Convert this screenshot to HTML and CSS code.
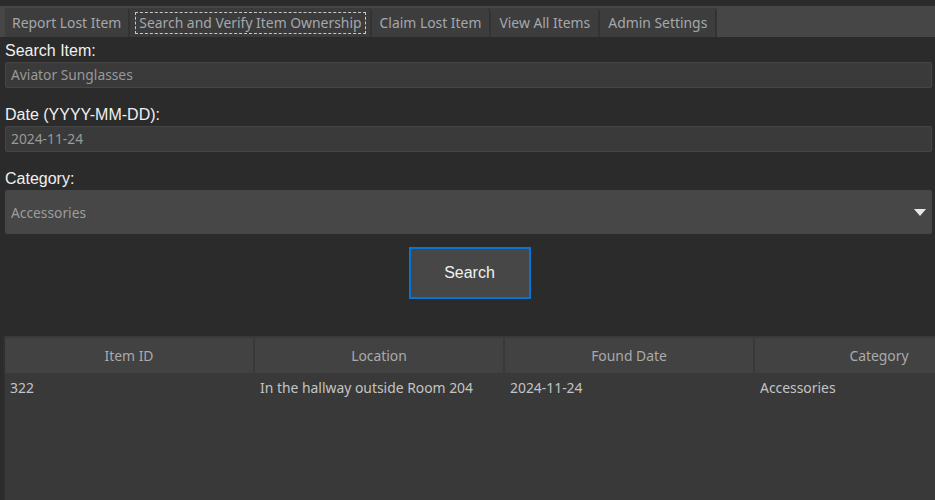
FILE: index.html
```html
<!DOCTYPE html>
<html>
<head>
<meta charset="utf-8">
<link rel="stylesheet" href="styles.css">
</head>
<body>
<div class="app">
  <div class="tabbar">
    <div class="tab first-tab">Report Lost Item</div>
    <div class="tab selected"><span class="focus">Search and Verify Item Ownership</span></div>
    <div class="tab">Claim Lost Item</div>
    <div class="tab">View All Items</div>
    <div class="tab">Admin Settings</div>
  </div>
  <div class="content">
    <div class="label first">Search Item:</div>
    <div class="entry">Aviator Sunglasses</div>
    <div class="label">Date (YYYY-MM-DD):</div>
    <div class="entry">2024-11-24</div>
    <div class="label">Category:</div>
    <div class="combo">
      <span class="combo-text">Accessories</span>
      <svg class="arrow" width="12" height="7" viewBox="0 0 12 7"><polygon points="0,0 12,0 6,7" fill="#e8e8e8"/></svg>
    </div>
    <div class="btn-row"><div class="btn">Search</div></div>
    <div class="table">
      <div class="thead">
        <div class="th">Item ID</div>
        <div class="th">Location</div>
        <div class="th">Found Date</div>
        <div class="th">Category</div>
      </div>
      <div class="tr">
        <div class="td">322</div>
        <div class="td">In the hallway outside Room 204</div>
        <div class="td">2024-11-24</div>
        <div class="td">Accessories</div>
      </div>
    </div>
  </div>
</div>
</body>
</html>
```
FILE: styles.css
```css
html, body {
  margin: 0;
  padding: 0;
  background: #2b2b2b;
  width: 935px;
  height: 500px;
  overflow: hidden;
}
.app {
  width: 935px;
  height: 500px;
  display: flex;
  flex-direction: column;
  background: #2b2b2b;
}
.tabbar {
  margin-top: 6px;
  height: 31px;
  background: #464646;
  display: flex;
  align-items: flex-end;
  padding-left: 5px;
  box-sizing: border-box;
}
.tab {
  height: 29px;
  box-sizing: border-box;
  background: #3d3d3d;
  border-right: 2px solid #333333;
  border-top-right-radius: 3px;
  color: #a4a8ad;
  font-family: "Noto Sans", sans-serif;
  font-size: 13.9px;
  display: flex;
  align-items: center;
  padding: 0 8px 0 8px;
  white-space: nowrap;
}
.tab.first-tab {
  padding: 0 7px 0 7px;
}
.tab.selected {
  padding: 0 4px 0 5px;
  background: #3b3b3b;
}
.focus {
  border: 1px dashed #c8c8c8;
  padding: 0 3px 1px 3px;
  line-height: 19px;
}
.content {
  flex: 1;
  display: flex;
  flex-direction: column;
  padding: 0 3px 0 5px;
  min-height: 0;
}
.label {
  font-family: "Liberation Sans", Arial, sans-serif;
  font-size: 16px;
  color: #f0f0f0;
  height: 22px;
  line-height: 22px;
  margin-top: 16px;
}
.label.first {
  margin-top: 3px;
}
.entry {
  height: 26px;
  box-sizing: border-box;
  background: #3a3a3a;
  border: 1px solid #454545;
  border-radius: 2px;
  color: #999999;
  font-family: "Noto Sans", sans-serif;
  font-size: 13.8px;
  line-height: 23px;
  padding-left: 5px;
}
.combo {
  height: 44px;
  background: #474747;
  border-radius: 2px;
  display: flex;
  align-items: center;
  justify-content: space-between;
  padding: 0 6px 0 6px;
  color: #9c9c9c;
  font-family: "Noto Sans", sans-serif;
  font-size: 13.8px;
}
.arrow {
  display: block;
  margin-top: 1px;
}
.btn-row {
  display: flex;
  justify-content: center;
  padding: 13px 0 37px 0;
}
.btn {
  width: 122px;
  height: 52px;
  box-sizing: border-box;
  border: 2px solid #0a74d2;
  background: #474747;
  color: #f0f0f0;
  font-family: "Liberation Sans", Arial, sans-serif;
  font-size: 16px;
  display: flex;
  align-items: center;
  justify-content: center;
  margin-left: 2px;
}
.table {
  flex: 1;
  background: #393939;
  margin-left: -2px;
  margin-right: -3px;
  border-left: 2px solid #2f2f2f;
  padding-top: 2px;
  overflow: hidden;
  font-family: "Noto Sans", sans-serif;
  font-size: 13.9px;
}
.thead, .tr {
  display: grid;
  grid-template-columns: 250px 250px 250px 250px;
  width: 1000px;
}
.th {
  height: 35px;
  background: #424242;
  border-right: 2px solid #393939;
  color: #aaaaaa;
  display: flex;
  align-items: center;
  justify-content: center;
  padding-bottom: 1px;
  box-sizing: border-box;
}
.td {
  height: 29px;
  color: #c4c4c4;
  display: flex;
  align-items: center;
  padding-left: 5px;
  white-space: nowrap;
}
```
